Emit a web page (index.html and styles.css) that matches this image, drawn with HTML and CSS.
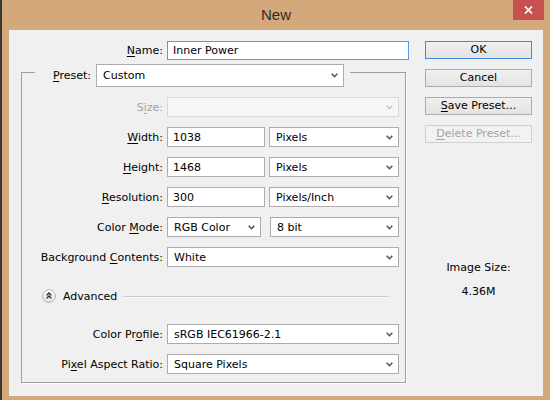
FILE: index.html
```html
<!DOCTYPE html>
<html lang="en">

<head>
    <meta charset="UTF-8">
    <title>New</title>
    <link rel="stylesheet" href="styles.css">
</head>

<body>
    <div class="window">
        <div class="titlebar">
            <div class="title">New</div>
            <div class="close">
                <svg width="9" height="8" viewBox="0 0 9 8">
                    <path d="M1 0.5 L8 7.5 M8 0.5 L1 7.5" stroke="#fff" stroke-width="1.7" fill="none" />
                </svg>
            </div>
        </div>

        <div class="dialog">
            <div class="main">
                <div class="name-row">
                    <span class="lbl"><u>N</u>ame:</span>
                    <div class="field focus">Inner Power</div>
                </div>

                <fieldset class="group">
                    <legend class="preset">
                        <div class="preset-in">
                            <span class="preset-lbl"><u>P</u>reset:</span>
                            <div class="select preset-sel">Custom
                                <svg class="chev" width="7" height="5" viewBox="0 0 7 5"><path d="M0.7 0.7 L3.5 3.7 L6.3 0.7" /></svg>
                            </div>
                        </div>
                    </legend>

                    <div class="rows">
                        <span class="lbl off">S<u>i</u>ze:</span>
                        <div class="select disabled">
                            <svg class="chev" width="7" height="5" viewBox="0 0 7 5"><path d="M0.7 0.7 L3.5 3.7 L6.3 0.7" /></svg>
                        </div>

                        <span class="lbl"><u>W</u>idth:</span>
                        <div class="pair">
                            <div class="field w-in">1038</div>
                            <div class="select w-unit">Pixels
                                <svg class="chev" width="7" height="5" viewBox="0 0 7 5"><path d="M0.7 0.7 L3.5 3.7 L6.3 0.7" /></svg>
                            </div>
                        </div>

                        <span class="lbl"><u>H</u>eight:</span>
                        <div class="pair">
                            <div class="field w-in">1468</div>
                            <div class="select w-unit">Pixels
                                <svg class="chev" width="7" height="5" viewBox="0 0 7 5"><path d="M0.7 0.7 L3.5 3.7 L6.3 0.7" /></svg>
                            </div>
                        </div>

                        <span class="lbl"><u>R</u>esolution:</span>
                        <div class="pair">
                            <div class="field w-in">300</div>
                            <div class="select w-unit">Pixels/Inch
                                <svg class="chev" width="7" height="5" viewBox="0 0 7 5"><path d="M0.7 0.7 L3.5 3.7 L6.3 0.7" /></svg>
                            </div>
                        </div>

                        <span class="lbl">Color <u>M</u>ode:</span>
                        <div class="pair">
                            <div class="select mode">RGB Color
                                <svg class="chev" width="7" height="5" viewBox="0 0 7 5"><path d="M0.7 0.7 L3.5 3.7 L6.3 0.7" /></svg>
                            </div>
                            <div class="select bits">8 bit
                                <svg class="chev" width="7" height="5" viewBox="0 0 7 5"><path d="M0.7 0.7 L3.5 3.7 L6.3 0.7" /></svg>
                            </div>
                        </div>

                        <span class="lbl">Background <u>C</u>ontents:</span>
                        <div class="select">White
                            <svg class="chev" width="7" height="5" viewBox="0 0 7 5"><path d="M0.7 0.7 L3.5 3.7 L6.3 0.7" /></svg>
                        </div>
                    </div>

                    <div class="advanced">
                        <svg class="adv-icon" width="14" height="14" viewBox="0 0 14 14">
                            <defs>
                                <linearGradient id="knob" x1="0" y1="0" x2="0" y2="1">
                                    <stop offset="0" stop-color="#ffffff" />
                                    <stop offset="1" stop-color="#e2e2e2" />
                                </linearGradient>
                            </defs>
                            <circle cx="7" cy="7" r="6.4" fill="url(#knob)" stroke="#b4b4b4" stroke-width="1" />
                            <path d="M4.6 6.4 L7 4 L9.4 6.4 M4.6 9.4 L7 7 L9.4 9.4" stroke="#222" stroke-width="1.3" fill="none" />
                        </svg>
                        <span class="adv-text">Advanced</span>
                        <span class="adv-line"></span>
                    </div>

                    <div class="rows lower">
                        <span class="lbl">Color Pr<u>o</u>file:</span>
                        <div class="select">sRGB IEC61966-2.1
                            <svg class="chev" width="7" height="5" viewBox="0 0 7 5"><path d="M0.7 0.7 L3.5 3.7 L6.3 0.7" /></svg>
                        </div>

                        <span class="lbl">Pi<u>x</u>el Aspect Ratio:</span>
                        <div class="select">Square Pixels
                            <svg class="chev" width="7" height="5" viewBox="0 0 7 5"><path d="M0.7 0.7 L3.5 3.7 L6.3 0.7" /></svg>
                        </div>
                    </div>
                </fieldset>
            </div>

            <div class="side">
                <div class="btn default">OK</div>
                <div class="btn">Cancel</div>
                <div class="btn"><u>S</u>ave Preset...</div>
                <div class="btn disabled"><u>D</u>elete Preset...</div>

                <div class="size-info">
                    <div>Image Size:</div>
                    <div>4.36M</div>
                </div>
            </div>
        </div>
    </div>
</body>

</html>
```

FILE: styles.css
```css
* {
    margin: 0;
    padding: 0;
    box-sizing: border-box;
}

body {
    width: 550px;
    height: 400px;
    overflow: hidden;
    font-family: "DejaVu Sans", Verdana, sans-serif;
    font-size: 11px;
    color: #000;
}

u {
    text-underline-offset: 2px;
}

/* window frame */

.window {
    width: 550px;
    height: 400px;
    background: #d3a97c;
    border-left: 2px solid #3a3631;
}

.titlebar {
    display: grid;
    grid-template-columns: 1fr auto 1fr;
    height: 30px;
}

.title {
    grid-column: 2;
    font-family: "Liberation Sans", Arial, sans-serif;
    font-size: 15px;
    line-height: 30px;
    color: #2b2b2b;
}

.close {
    grid-column: 3;
    justify-self: end;
    width: 31px;
    height: 20px;
    margin-right: 6px;
    background: #c75050;
    display: flex;
    align-items: center;
    justify-content: center;
}

.dialog {
    display: flex;
    gap: 16px;
    height: 366px;
    margin: 0 7px;
    padding: 11px 11px 0 0;
    background: #f0f0f0;
}

.main {
    width: 400px;
}

/* controls */

.lbl {
    text-align: right;
    white-space: nowrap;
}

.lbl.off {
    color: #a3a3a3;
}

.field {
    height: 20px;
    display: flex;
    align-items: center;
    padding-left: 5px;
    background: #fff;
    border: 1px solid #abadb3;
}

.select {
    height: 20px;
    display: flex;
    align-items: center;
    justify-content: space-between;
    padding: 0 5px 0 6px;
    background: #fff;
    border: 1px solid #acacac;
    white-space: nowrap;
}

.chev {
    flex-shrink: 0;
    margin-left: auto;
}

.chev path {
    fill: none;
    stroke: #555;
    stroke-width: 1.6;
}

.select.disabled {
    background: #f6f6f6;
    border-color: #d9d9d9;
}

.select.disabled .chev path {
    stroke: #c4c4c4;
}

.name-row {
    display: flex;
    align-items: center;
    gap: 4px;
}

.name-row .lbl {
    width: 154px;
}

.field.focus {
    width: 242px;
    height: 19px;
    border-color: #569de5;
}

/* preset group */

.group {
    width: 385px;
    margin: -3px 0 0 12px;
    padding: 0 6px 8px 0;
    border: 1px solid #a0a0a0;
    box-shadow: 1px 1px 0 #fff;
    min-inline-size: 0;
}

.preset {
    margin-left: 13px;
    padding: 7px 6px 0 16px;
}

.preset-in {
    display: flex;
    align-items: center;
}

.preset-lbl {
    width: 40px;
    text-align: right;
}

.preset-sel {
    width: 248px;
    height: 23px;
    margin-left: 5px;
}

.rows {
    display: grid;
    grid-template-columns: 141px 232px;
    grid-auto-rows: 20px;
    column-gap: 4px;
    row-gap: 10px;
    align-items: center;
    margin-top: 10px;
}

.rows.lower {
    margin-top: 21px;
}

.pair {
    display: flex;
    justify-content: space-between;
}

.w-in {
    width: 98px;
}

.w-unit {
    width: 130px;
}

.mode {
    width: 94px;
}

.bits {
    width: 129px;
}

.advanced {
    display: flex;
    align-items: center;
    height: 14px;
    margin: 22px 10px 0 20px;
}

.adv-text {
    margin-left: 7px;
}

.adv-line {
    flex: 1;
    height: 1px;
    margin-left: 6px;
    background: #cdcdcd;
    box-shadow: 0 1px 0 #fafafa;
}

/* buttons column */

.side {
    width: 107px;
    display: flex;
    flex-direction: column;
    gap: 10px;
}

.btn {
    height: 18px;
    line-height: 16px;
    text-align: center;
    background: linear-gradient(#f0f0f0, #e3e3e3);
    border: 1px solid #acacac;
}

.btn.default {
    border-color: #3c8be0;
}

.btn.disabled {
    color: #a3a3a3;
    background: #f2f2f2;
    border-color: #d0d0d0;
}

.size-info {
    margin-top: 108px;
    display: flex;
    flex-direction: column;
    gap: 10px;
    text-align: center;
    line-height: 14px;
}
```
